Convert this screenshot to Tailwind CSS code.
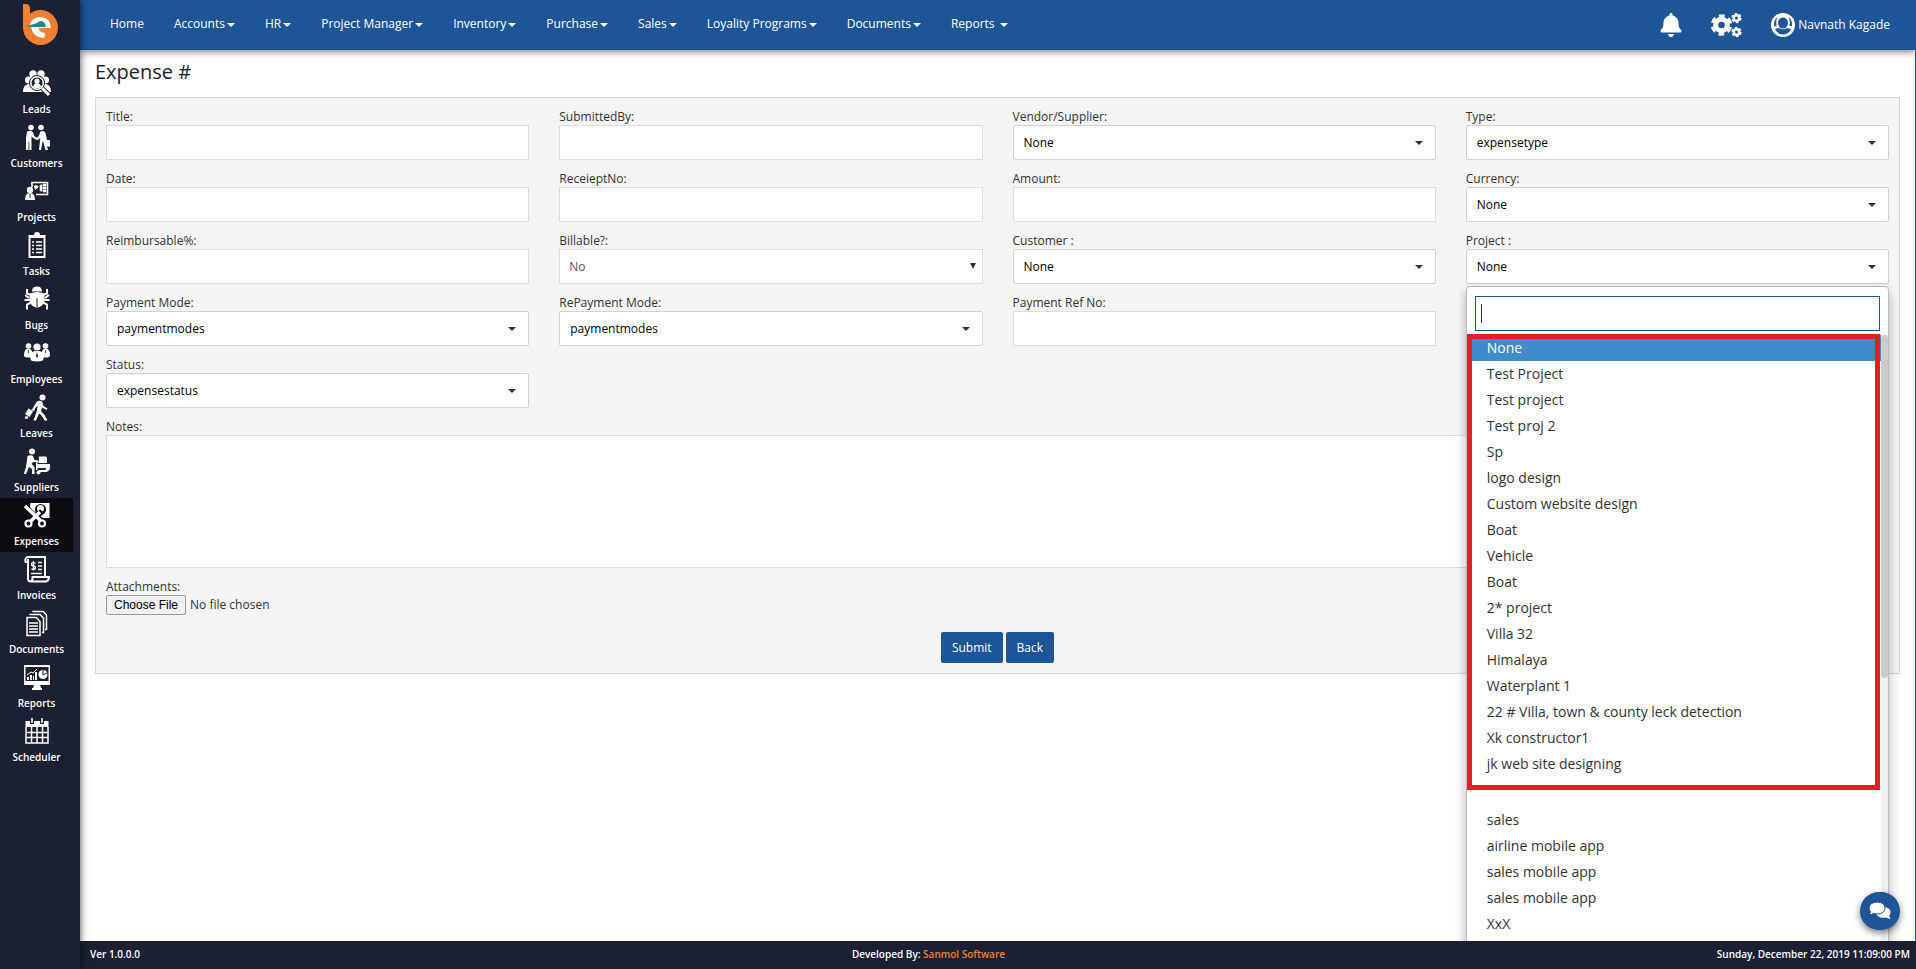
<!DOCTYPE html>
<html lang="en">
<head>
<meta charset="utf-8">
<title>Expense</title>
<script src="https://cdn.jsdelivr.net/npm/@tailwindcss/browser@4"></script>
</head>
<body class="flex h-screen overflow-hidden bg-white font-['Open_Sans',sans-serif] text-[12px] text-[#333]">

<svg class="hidden">
  <symbol id="caret" viewBox="0 0 8 4"><path d="M0 0h8L4 4z" fill="currentColor"/></symbol>
</svg>

<!-- Sidebar -->
<aside class="relative z-30 flex w-20 shrink-0 flex-col bg-[#1b2032] shadow-[0_0_8px_rgba(0,0,0,0.7)]">
  <a href="#" aria-label="Home" class="flex h-[66px] justify-center pt-1">
    <svg class="h-[42px] w-9" viewBox="0 0 36 42">
      <path d="M1 0h3q4 0 4 5v4.500A17.500 17.500 0 1 1 1 23z" fill="#f08030"/>
      <path d="M7 22.500Q9 13 18.500 13 28.500 13.500 29 24H17q-1 4 6 5 1 3-1 5-11 0-13-11z" fill="#fff"/>
      <path d="M5 22q7-2 10-3 4-4 8 .5l1 3.500H8z" fill="#158a8c"/>
    </svg>
  </a>
  <nav class="flex flex-col text-[10px] font-semibold text-white">
    <a href="#" class="flex h-[54px] w-[73px] flex-col items-center">
      <svg class="mt-1 h-7 w-7" viewBox="0 0 28 28" fill="#fff"><circle cx="10" cy="4" r="3.700"/><circle cx="18" cy="4" r="3.700"/><circle cx="5.500" cy="10" r="3.500"/><circle cx="22.500" cy="10" r="3.500"/><path d="M0 22q0-7 5-8h18q5 1 5 8zM6 7h16v8H6z"/><circle cx="14" cy="13" r="7.500" stroke="#1b2032" stroke-width="1"/><circle cx="14" cy="13" r="5.500" fill="#1b2032"/><circle cx="14" cy="11" r="2.600"/><path d="M10 17q1-4 4-4t4 4q-4 3-8 0z"/><path d="M19 18l7 7" stroke="#1b2032" stroke-width="5"/><path d="M19 18l7 7" stroke="#fff" stroke-width="3"/></svg>
      <span class="mt-1 leading-[14px]">Leads</span></a>
    <a href="#" class="flex h-[54px] w-[73px] flex-col items-center">
      <svg class="mt-1 h-7 w-7" viewBox="0 0 28 28" fill="#fff"><circle cx="8" cy="3.500" r="2.800"/><circle cx="18" cy="3.500" r="2.800"/><path d="M4 7.500l4-1 2 2 1.500 4 2 1 2-1 2-5 3-.5 2 2 1.500 7h3v6.500h-3l1 3.500h-2.500l-2.500-9-.5 1-1.500 8h-2l1-10 .5-2-2 1.500-2 .5-2.500-1.500L8.500 12.500V26H6.300v-8h-.8v8H3V14z"/></svg>
      <span class="mt-1 leading-[14px]">Customers</span></a>
    <a href="#" class="flex h-[54px] w-[73px] flex-col items-center">
      <svg class="mt-1 h-7 w-7" viewBox="0 0 28 28" fill="#fff"><path d="M9 9V4.500h15.500v12H13" fill="none" stroke="#fff" stroke-width="1.600"/><circle cx="7" cy="12" r="3.200"/><path d="M2 22q0-7 5-7t5 7z"/><circle cx="13" cy="9" r="2"/><path d="M12 12l4-4M17 7h2v6h-2zM20 6h3v2h-3zM20 9h3v2h-3zM20 12h3v2h-3z" stroke="#fff" stroke-width=".6"/><path d="M7 16v4" stroke="#1b2032"/></svg>
      <span class="mt-1 leading-[14px]">Projects</span></a>
    <a href="#" class="flex h-[54px] w-[73px] flex-col items-center">
      <svg class="mt-1 h-7 w-7" viewBox="0 0 28 28" fill="#fff"><path d="M7 4H6.500v21h15V4H20" fill="none" stroke="#fff" stroke-width="2"/><path d="M6 3h5q0-3 3-3t3 3h5v3H6z"/><path d="M9 10h2M13 10h6M9 13.500h2M13 13.500h6M9 17h2M13 17h6M9 20.500h2M13 20.500h6" stroke="#fff" stroke-width="1.500"/></svg>
      <span class="mt-1 leading-[14px]">Tasks</span></a>
    <a href="#" class="flex h-[54px] w-[73px] flex-col items-center">
      <svg class="mt-1 h-7 w-7" viewBox="0 0 28 28" fill="#fff"><path d="M9 5.500q0-5 5-5t5 5zM7 7.500q7-3 14 0 2 8-2 12-5 4-10 0-4-4-2-12z"/><path d="M8 9L4 7.500V3M20 9l4-1.500V3M7 14H1.500M21 14h5.500M8 16.500L4 18.500v5M20 16.500l4 2v5M6 12L2 9M22 12l4-3" fill="none" stroke="#fff" stroke-width="2"/><path d="M14 12v9" stroke="#1b2032"/></svg>
      <span class="mt-1 leading-[14px]">Bugs</span></a>
    <a href="#" class="flex h-[54px] w-[73px] flex-col items-center">
      <svg class="mt-1 h-7 w-7" viewBox="0 0 28 28" fill="#fff"><circle cx="5.500" cy="6" r="2.800"/><circle cx="22.500" cy="6" r="2.800"/><path d="M1 15q0-6 4-6.500l3 1 4 8H4q-3 0-3-2.500zM27 15q0-6-4-6.500l-3 1-4 8h8q3 0 3-2.500z"/><circle cx="14" cy="7" r="3.600"/><path d="M7.500 19q-1-7 4-8h5q5 1 4 8 0 2.500-6.500 2.500T7.500 19z"/><path d="M14 12l1 4-1 2-1-2z" fill="#1b2032"/><path d="M5.500 10v3M22.500 10v3" stroke="#1b2032" stroke-width=".8"/></svg>
      <span class="mt-1 leading-[14px]">Employees</span></a>
    <a href="#" class="flex h-[54px] w-[73px] flex-col items-center">
      <svg class="mt-1 h-7 w-7" viewBox="0 0 28 28" fill="#fff"><circle cx="19.500" cy="3.500" r="3"/><path d="M14 7.500q3-1.500 5 0l1.500 4.500 4 2.500-1 1.500-4.500-2.500-1 3.500 3.500 4 3 5.500h-3l-3-5-2.500-2-3 7H10.500l3.500-10 .5-4.500-2 1.500-1.500 4-1.500-1 1.500-4.500zM5.500 14.500l4.500 3-3.500 5.500-4.500-3z"/><path d="M8.500 16.500l3-3" stroke="#fff" stroke-width="1.300"/><circle cx="3.500" cy="23.500" r="1.600"/></svg>
      <span class="mt-1 leading-[14px]">Leaves</span></a>
    <a href="#" class="flex h-[54px] w-[73px] flex-col items-center">
      <svg class="mt-1 h-7 w-7" viewBox="0 0 28 28" fill="#fff"><circle cx="9" cy="3.500" r="3"/><path d="M4.500 8q3-1.500 5.500 0l1.500 4 4 .5v2l-5.500-.5-1.500 2 3 3v7H9v-5l-3-2-3 7H.8l2.200-7zM16 8.500h7l1 1.500v5h-8zM14.500 16H27v5q-1.500 2.500-3.500 3h-8v-2h7l.5-2h-8.500zM13 13h1.500v9H13z"/><circle cx="15.500" cy="24.500" r="2"/></svg>
      <span class="mt-1 leading-[14px]">Suppliers</span></a>
    <a href="#" aria-current="page" class="flex h-[54px] w-[73px] flex-col items-center bg-[#0a0c12]">
      <svg class="mt-1 h-7 w-7" viewBox="0 0 28 28" fill="#fff"><path d="M7.500 1H26.500v15H20l-5-3-4-3-4-5z"/><circle cx="17.500" cy="7.500" r="5.500" fill="#0a0c12"/><circle cx="17.500" cy="6.500" r="3.500"/><path d="M2 5l17 15M19 9L9 20" stroke="#0a0c12" stroke-width="5.500"/><path d="M2 4l16 15M17 10L8 19" stroke="#fff" stroke-width="3.500"/><circle cx="5.500" cy="21.500" r="3" fill="#0a0c12" stroke="#fff" stroke-width="2.200"/><circle cx="19" cy="21.500" r="3" fill="#0a0c12" stroke="#fff" stroke-width="2.200"/></svg>
      <span class="mt-1 leading-[14px]">Expenses</span></a>
    <a href="#" class="flex h-[54px] w-[73px] flex-col items-center">
      <svg class="mt-1 h-7 w-7" viewBox="0 0 28 28" fill="none" stroke="#fff" stroke-width="2"><path d="M5 6H2.500q-1-5 3-5H22v19M5 3v20q0 2.500 3 2.500h15q3-1 3-4.500H9.500v2q-.5 2-2 2.500"/><path d="M15 6.500h4M15 10h4M15 13.500h4M8 17.500h11" stroke-width="1.500"/><path d="M12.500 7q-4-1-4 1t2 2 2 2-4 1M10.500 5v9.500" stroke-width="1.300"/></svg>
      <span class="mt-1 leading-[14px]">Invoices</span></a>
    <a href="#" class="flex h-[54px] w-[73px] flex-col items-center">
      <svg class="mt-1 h-7 w-7" viewBox="0 0 28 28" fill="none" stroke="#fff" stroke-width="1.500"><path d="M4 7.500h9.500l3.500 4v14H4zM7 5V4.500h10L20.500 8v14.500H19M10 2v-.5h10L23.500 5v14.500H22"/><path d="M6 13h9M6 16h9M6 19h9M6 22h9"/></svg>
      <span class="mt-1 leading-[14px]">Documents</span></a>
    <a href="#" class="flex h-[54px] w-[73px] flex-col items-center">
      <svg class="mt-1 h-7 w-7" viewBox="0 0 28 28" fill="#fff"><path d="M1 1h26v20H1zM2.500 3v14h23V3z" fill-rule="evenodd"/><path d="M11 21h6l1 3h1v2H9v-2h1z"/><path d="M4 16v-3h2v3zM7 16v-5h2v5zM10 16v-4h1v4zM12 16V8h2v8z"/><path d="M4 11l4-3 2 1 4-4" fill="none" stroke="#fff"/><circle cx="20" cy="10.500" r="4.500"/><path d="M20 6v5l4-2" fill="none" stroke="#1b2032"/></svg>
      <span class="mt-1 leading-[14px]">Reports</span></a>
    <a href="#" class="flex h-[54px] w-[73px] flex-col items-center">
      <svg class="mt-1 h-7 w-7" viewBox="0 0 28 28" fill="none" stroke="#fff" stroke-width="1.500"><path d="M3 9v16h22V9M8.500 9v16M14 9v16M19.500 9v16M3 14.500h22M3 19.500h22"/><path d="M2.500 3h23v6h-23z" fill="#fff" stroke="none"/><path d="M9 1v5M19 1v5" stroke="#1b2032" stroke-width="4"/><path d="M9 0v5M19 0v5"/></svg>
      <span class="mt-1 leading-[14px]">Scheduler</span></a>
  </nav>
</aside>

<div class="flex min-w-0 flex-1 flex-col">
  <!-- Top bar -->
  <header class="relative z-20 flex h-[50px] shrink-0 items-center justify-between bg-[#1d5597] pr-[26px] pl-[30px] text-white shadow-[0_1px_8px_rgba(0,0,0,0.6)]">
    <nav class="flex items-center gap-[30px] pb-[3px] font-medium">
      <a href="#">Home</a>
      <a href="#" class="flex items-center gap-[2px]">Accounts<svg class="mt-[2px] h-1 w-2"><use href="#caret"/></svg></a>
      <a href="#" class="flex items-center gap-[2px]">HR<svg class="mt-[2px] h-1 w-2"><use href="#caret"/></svg></a>
      <a href="#" class="flex items-center gap-[2px]">Project Manager<svg class="mt-[2px] h-1 w-2"><use href="#caret"/></svg></a>
      <a href="#" class="flex items-center gap-[2px]">Inventory<svg class="mt-[2px] h-1 w-2"><use href="#caret"/></svg></a>
      <a href="#" class="flex items-center gap-[2px]">Purchase<svg class="mt-[2px] h-1 w-2"><use href="#caret"/></svg></a>
      <a href="#" class="flex items-center gap-[2px]">Sales<svg class="mt-[2px] h-1 w-2"><use href="#caret"/></svg></a>
      <a href="#" class="flex items-center gap-[2px]">Loyality Programs<svg class="mt-[2px] h-1 w-2"><use href="#caret"/></svg></a>
      <a href="#" class="flex items-center gap-[2px]">Documents<svg class="mt-[2px] h-1 w-2"><use href="#caret"/></svg></a>
      <a href="#" class="flex items-center gap-[5px]">Reports<svg class="mt-[2px] h-1 w-2"><use href="#caret"/></svg></a>
    </nav>
    <div class="flex items-center gap-[29px]">
      <button aria-label="Notifications"><svg class="h-6 w-[22px]" viewBox="0 0 448 512" fill="currentColor"><path d="M224 512c35.320 0 63.970-28.650 63.970-64H160.030c0 35.350 28.650 64 63.970 64zm215.390-149.710c-19.320-20.760-55.470-51.990-55.470-154.290 0-77.700-54.480-139.900-127.940-155.160V32c0-17.670-14.320-32-31.980-32s-31.980 14.330-31.980 32v20.840C118.560 68.100 64.080 130.300 64.080 208c0 102.300-36.150 133.530-55.470 154.290-6 6.450-8.660 14.160-8.610 21.710.11 16.400 12.980 32 32.100 32h383.800c19.120 0 32-15.600 32.100-32 .05-7.550-2.610-15.270-8.610-21.710z"/></svg></button>
      <button aria-label="Settings"><svg class="h-6 w-[31px]" viewBox="0 0 31 24" fill="none" stroke="currentColor"><circle cx="10.500" cy="12" r="5.800" stroke-width="5"/><circle cx="10.500" cy="12" r="9" stroke-width="3.500" stroke-dasharray="5.500 3.925" stroke-dashoffset="-2"/><circle cx="25.500" cy="5" r="2.700" stroke-width="2.400"/><circle cx="25.500" cy="5" r="4.300" stroke-width="1.800" stroke-dasharray="2.600 1.903"/><circle cx="25.500" cy="19" r="2.700" stroke-width="2.400"/><circle cx="25.500" cy="19" r="4.300" stroke-width="1.800" stroke-dasharray="2.600 1.903"/></svg></button>
      <button class="flex items-center gap-[3px]"><svg class="h-6 w-6" viewBox="0 0 24 24"><circle cx="12" cy="12" r="12" fill="currentColor"/><ellipse cx="12" cy="10" rx="5" ry="5.500" fill="#1d5597"/><path d="M4 16.500q2-1.500 4.500-1.200 3.500 2 7 0 2.500-.3 4.500 1.200-3 5-8 5t-8-5z" fill="#1d5597"/><path d="M3.300 13.500q-1.300-6 3.200-9.500-2 4-.8 8.500zM20.700 13.500q1.300-6-3.200-9.500 2 4 .8 8.500z" fill="#1d5597"/></svg><span>Navnath Kagade</span></button>
    </div>
  </header>

  <!-- Page -->
  <main class="min-h-0 flex-1 overflow-hidden border-r border-[#1d5597] px-[15px] pt-2">
    <h1 class="mb-[11px] text-[20px] leading-[28px] font-semibold text-[#1b2032]"><span class="font-medium">Expense #</span></h1>
    <form class="border border-[#d5d5d5] bg-[#f5f5f5] px-[10px] py-[10px]">
      <div class="grid grid-cols-4 gap-x-[30px] gap-y-[10px]">
        <div class="flex flex-col"><label for="title" class="leading-[17px]">Title:</label><input id="title" class="h-[35px] border border-[#ddd] bg-white px-[9px]"></div>
        <div class="flex flex-col"><label for="by" class="leading-[17px]">SubmittedBy:</label><input id="by" class="h-[35px] border border-[#ddd] bg-white px-[9px]"></div>
        <div class="flex flex-col"><label for="vendor" class="leading-[17px]">Vendor/Supplier:</label><div class="relative"><select id="vendor" class="h-[35px] w-full appearance-none rounded-[2px] border border-[#d2d2d2] bg-white px-[10px] text-black"><option>None</option></select><svg class="pointer-events-none absolute top-4 right-[13px] h-1 w-2"><use href="#caret"/></svg></div></div>
        <div class="flex flex-col"><label for="type" class="leading-[17px]">Type:</label><div class="relative"><select id="type" class="h-[35px] w-full appearance-none rounded-[2px] border border-[#d2d2d2] bg-white px-[10px] text-black"><option>expensetype</option></select><svg class="pointer-events-none absolute top-4 right-[13px] h-1 w-2"><use href="#caret"/></svg></div></div>

        <div class="flex flex-col"><label for="date" class="leading-[17px]">Date:</label><input id="date" class="h-[35px] border border-[#ddd] bg-white px-[9px]"></div>
        <div class="flex flex-col"><label for="receipt" class="leading-[17px]">ReceieptNo:</label><input id="receipt" class="h-[35px] border border-[#ddd] bg-white px-[9px]"></div>
        <div class="flex flex-col"><label for="amount" class="leading-[17px]">Amount:</label><input id="amount" class="h-[35px] border border-[#ddd] bg-white px-[9px]"></div>
        <div class="flex flex-col"><label for="currency" class="leading-[17px]">Currency:</label><div class="relative"><select id="currency" class="h-[35px] w-full appearance-none rounded-[2px] border border-[#d2d2d2] bg-white px-[10px] text-black"><option>None</option></select><svg class="pointer-events-none absolute top-4 right-[13px] h-1 w-2"><use href="#caret"/></svg></div></div>

        <div class="flex flex-col"><label for="reimb" class="leading-[17px]">Reimbursable%:</label><input id="reimb" class="h-[35px] border border-[#ddd] bg-white px-[9px]"></div>
        <div class="flex flex-col"><label for="billable" class="leading-[17px]">Billable?:</label><div class="relative"><select id="billable" class="h-[35px] w-full appearance-none border border-[#ddd] bg-white px-[9px] text-[#555]"><option>No</option></select><svg class="pointer-events-none absolute top-[14px] right-[7px] h-[6px] w-[6px]" viewBox="0 0 6 6"><path d="M0 0h6L3 6z" fill="#333"/></svg></div></div>
        <div class="flex flex-col"><label for="customer" class="leading-[17px]">Customer :</label><div class="relative"><select id="customer" class="h-[35px] w-full appearance-none rounded-[2px] border border-[#d2d2d2] bg-white px-[10px] text-black"><option>None</option></select><svg class="pointer-events-none absolute top-4 right-[13px] h-1 w-2"><use href="#caret"/></svg></div></div>
        <div class="relative flex flex-col"><label for="project" class="leading-[17px]">Project :</label><div class="relative"><select id="project" class="h-[35px] w-full appearance-none rounded-[2px] border border-[#d2d2d2] bg-white px-[10px] text-black"><option>None</option></select><svg class="pointer-events-none absolute top-4 right-[13px] h-1 w-2"><use href="#caret"/></svg></div>
          <!-- Open project list -->
          <div class="absolute top-full right-0 left-0 z-10 mt-[2px] rounded-[4px] border border-[#bbb] bg-white pt-[9px] text-[14px] shadow-[0_6px_12px_rgba(0,0,0,0.3)]">
            <div class="relative px-2 pb-1"><input aria-label="Search project" class="block h-[35px] w-full border border-[#1d5597] bg-white px-[5px] outline-none"><span class="absolute top-2 left-[14px] h-[19px] w-px bg-[#333]"></span></div>
            <div class="relative flex">
              <div class="pointer-events-none absolute -top-px left-0 right-2 h-[456px] border-[5px] border-[#ed1c24]"></div>
              <ul class="flex-1 pb-4 leading-[26px]">
                <li class="bg-[#428bca] pl-5 text-white">None</li>
                <li class="pl-5">Test Project</li><li class="pl-5">Test project</li><li class="pl-5">Test proj 2</li><li class="pl-5">Sp</li><li class="pl-5">logo design</li><li class="pl-5">Custom website design</li><li class="pl-5">Boat</li><li class="pl-5">Vehicle</li><li class="pl-5">Boat</li><li class="pl-5">2* project</li><li class="pl-5">Villa 32</li><li class="pl-5">Himalaya</li><li class="pl-5">Waterplant 1</li><li class="pl-5">22 # Villa, town &amp; county leck detection</li><li class="pl-5">Xk constructor1</li><li class="pl-5">jk web site designing</li>
                <li class="mt-[30px] pl-5">sales</li><li class="pl-5">airline mobile app</li><li class="pl-5">sales mobile app</li><li class="pl-5">sales mobile app</li><li class="pl-5">XxX</li>
              </ul>
              <div class="w-[7px] bg-[#f2f2f2]"><div class="h-[343px] rounded-full bg-[#ccc]"></div></div>
            </div>
          </div>
        </div>

        <div class="flex flex-col"><label for="pay" class="leading-[17px]">Payment Mode:</label><div class="relative"><select id="pay" class="h-[35px] w-full appearance-none rounded-[2px] border border-[#d2d2d2] bg-white px-[10px] text-black"><option>paymentmodes</option></select><svg class="pointer-events-none absolute top-4 right-[13px] h-1 w-2"><use href="#caret"/></svg></div></div>
        <div class="flex flex-col"><label for="repay" class="leading-[17px]">RePayment Mode:</label><div class="relative"><select id="repay" class="h-[35px] w-full appearance-none rounded-[2px] border border-[#d2d2d2] bg-white px-[10px] text-black"><option>paymentmodes</option></select><svg class="pointer-events-none absolute top-4 right-[13px] h-1 w-2"><use href="#caret"/></svg></div></div>
        <div class="flex flex-col"><label for="ref" class="leading-[17px]">Payment Ref No:</label><input id="ref" class="h-[35px] border border-[#ddd] bg-white px-[9px]"></div>
        <div></div>

        <div class="flex flex-col"><label for="status" class="leading-[17px]">Status:</label><div class="relative"><select id="status" class="h-[35px] w-full appearance-none rounded-[2px] border border-[#d2d2d2] bg-white px-[10px] text-black"><option>expensestatus</option></select><svg class="pointer-events-none absolute top-4 right-[13px] h-1 w-2"><use href="#caret"/></svg></div></div>

        <div class="col-span-4 flex flex-col"><label for="notes" class="leading-[17px]">Notes:</label><textarea id="notes" class="h-[133px] resize-none border border-[#ddd] bg-white p-2"></textarea></div>

        <div class="col-span-4 flex flex-col"><label for="file" class="leading-[17px]">Attachments:</label><input id="file" type="file" class="h-5 leading-[18px] file:mr-1 file:h-5 file:rounded-[2px] file:border file:border-solid file:border-[#999] file:bg-[#f0f0f0] file:px-[7px] file:font-['Liberation_Sans',sans-serif] file:text-[12px] file:leading-[16px] file:text-black"></div>
      </div>
      <div class="mt-[17px] flex justify-center gap-[3px]">
        <button type="submit" class="h-[31px] rounded-[2px] bg-[#1d5597] px-[11px] text-white">Submit</button>
        <button type="button" class="h-[31px] rounded-[2px] bg-[#1d5597] px-[11px] text-white">Back</button>
      </div>
    </form>
  </main>

  <!-- Footer -->
  <footer class="relative z-20 flex h-7 shrink-0 items-center justify-between border-b border-[#222] bg-[#1b2032] pr-[6px] pl-[10px] text-[10px] font-semibold text-white">
    <span>Ver 1.0.0.0</span>
    <span>Developed By: <a href="#" class="text-[#f08030]">Sanmol Software</a></span>
    <span>Sunday, December 22, 2019 11:09:00 PM</span>
  </footer>
</div>

<button aria-label="Chat" class="fixed right-4 bottom-[39px] z-40 flex h-[38px] w-10 items-center justify-center rounded-full bg-[#1d5597] shadow-[0_3px_7px_rgba(0,0,0,0.5)]">
  <svg class="h-[18px] w-[22px]" viewBox="0 0 22 18"><path d="M21.500 16.500q-2 .5-4.500-1-8 1.500-9.500-4V6l8-1q6.500 1 6 5.500 0 2-1.500 3.500z" fill="#fff"/><path d="M8 0q8 .5 8 6t-8 6q-2 0-3.500-.6Q2 13 0 12.500L1.500 10Q0 8 0 6 .5.500 8 0z" fill="#fff" stroke="#1d5597" stroke-width="1"/></svg>
</button>
</body>
</html>
